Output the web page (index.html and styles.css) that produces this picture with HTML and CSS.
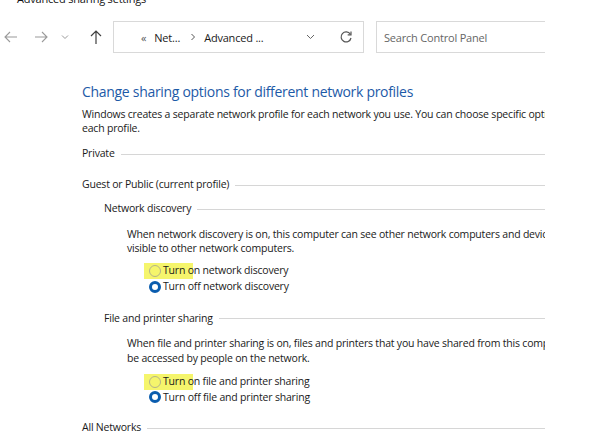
FILE: index.html
```html
<!DOCTYPE html>
<html>
<head>
<meta charset="utf-8">
<link rel="stylesheet" href="styles.css">
</head>
<body>
<div class="window">
  <div class="titlebar"><span class="title">Advanced sharing settings</span></div>
  <div class="nav">
    <div class="navbtns">
      <svg class="nb" width="16" height="16" viewBox="0 0 16 16"><path d="M14 8H2M7 3L2 8l5 5" fill="none" stroke="#9a9a9a" stroke-width="1.1"/></svg>
      <svg class="nb" width="16" height="16" viewBox="0 0 16 16"><path d="M2 8h12M9 3l5 5-5 5" fill="none" stroke="#9a9a9a" stroke-width="1.1"/></svg>
      <svg class="nb small" width="8" height="8" viewBox="0 0 8 8"><path d="M1 2.5l3 3 3-3" fill="none" stroke="#9a9a9a" stroke-width="1"/></svg>
      <svg class="nb" width="16" height="16" viewBox="0 0 16 16"><path d="M8 15V2M3 7l5-5 5 5" fill="none" stroke="#404040" stroke-width="1.2"/></svg>
    </div>
    <div class="address">
      <span class="crumbs">
        <span class="dbl">«</span>
        <span class="crumb">Net...</span>
        <svg width="6" height="8" viewBox="0 0 6 8" class="sep"><path d="M1.5 1l3 3-3 3" fill="none" stroke="#555" stroke-width="1"/></svg>
        <span class="crumb">Advanced ...</span>
      </span>
      <svg class="dd" width="9" height="6" viewBox="0 0 9 6"><path d="M1 1l3.5 3.5L8 1" fill="none" stroke="#666" stroke-width="1"/></svg>
      <svg class="refresh" width="14" height="14" viewBox="0 0 14 14"><path d="M11.3 4.2A5 5 0 1 0 12 8" fill="none" stroke="#555" stroke-width="1.2"/><path d="M12 1.5v3.3H8.7" fill="none" stroke="#555" stroke-width="1.2"/></svg>
    </div>
    <div class="search">Search Control Panel</div>
  </div>

  <div class="content">
    <h1 class="heading">Change sharing options for different network profiles</h1>
    <p class="intro">Windows creates a separate network profile for each network you use. You can choose specific options for<br>each profile.</p>

    <div class="group g-private">Private</div>
    <div class="group g-guest">Guest or Public (current profile)</div>

    <div class="sub g-nd">Network discovery</div>
    <p class="desc d-nd">When network discovery is on, this computer can see other network computers and devices and is<br>visible to other network computers.</p>
    <div class="options o-nd">
      <div class="opt"><span class="mark"><i class="radio"></i>Turn </span>on network discovery</div>
      <div class="opt"><i class="radio on"></i>Turn off network discovery</div>
    </div>

    <div class="sub g-fp">File and printer sharing</div>
    <p class="desc d-fp">When file and printer sharing is on, files and printers that you have shared from this computer can<br>be accessed by people on the network.</p>
    <div class="options o-fp">
      <div class="opt"><span class="mark"><i class="radio"></i>Turn </span>on file and printer sharing</div>
      <div class="opt"><i class="radio on"></i>Turn off file and printer sharing</div>
    </div>

    <div class="group g-all">All Networks</div>
  </div>
</div>
</body>
</html>
```

FILE: styles.css
```css
* { box-sizing: border-box; }
html, body { margin: 0; padding: 0; background: #fff; }
body {
  font-family: "Segoe UI", "Open Sans", "Noto Sans", sans-serif;
  font-size: 10.5px;
  letter-spacing: -0.2px;
  color: #1a1a1a;
  width: 590px;
  height: 440px;
  overflow: hidden;
}
.window {
  width: 545px;
  height: 440px;
  overflow: hidden;
}
.titlebar {
  height: 10px;
  overflow: hidden;
  padding-left: 17px;
}
.title {
  display: block;
  line-height: 16px;
  margin-top: -9px;
  font-size: 11px;
  color: #111;
  white-space: nowrap;
}
.nav {
  display: flex;
  align-items: center;
  height: 32px;
  margin-top: 11px;
}
.navbtns {
  display: flex;
  align-items: center;
  width: 113px;
  flex: none;
  padding-left: 3px;
}
.nb { flex: none; }
.navbtns .nb:nth-child(1) { margin-right: 14px; }
.navbtns .nb:nth-child(2) { margin-right: 12px; }
.navbtns .nb:nth-child(3) { margin-right: 19px; }
.address {
  width: 251px;
  height: 32px;
  border: 1px solid #d9d9d9;
  display: flex;
  align-items: center;
  padding-left: 27px;
  flex: none;
}
.crumbs {
  display: flex;
  align-items: center;
  font-size: 11px;
  color: #1a1a1a;
  white-space: nowrap;
}
.dbl { color: #555; font-size: 11px; margin-right: 8px; }
.sep { margin: 0 8px 0 10px; }
.dd { margin-left: auto; }
.refresh { margin-left: 24px; margin-right: 10px; }
.search {
  margin-left: 12px;
  flex: none;
  width: 200px;
  height: 32px;
  border: 1px solid #d9d9d9;
  display: flex;
  align-items: center;
  padding-left: 7px;
  color: #666;
  font-size: 11px;
  white-space: nowrap;
}
.content {
  padding-left: 82px;
  white-space: nowrap;
}
.heading {
  margin: 29px 0 0;
  font-size: 14px;
  letter-spacing: -0.3px;
  font-weight: normal;
  line-height: 20px;
  color: #1d5aa7;
}
.intro {
  margin: 5px 0 0;
  line-height: 14px;
}
.group, .sub {
  display: flex;
  align-items: center;
  line-height: 15px;
}
.group::after, .sub::after {
  content: "";
  flex: 1;
  border-top: 1px solid #d6d6d6;
  margin-left: 6px;
  margin-top: 1px;
}
.g-private { margin-top: 11px; }
.g-guest { margin-top: 16px; }
.sub { margin-left: 22px; }
.g-nd { margin-top: 9px; }
.g-fp { margin-top: 16px; }
.desc { margin: 0 0 0 45px; }
.d-nd { margin-top: 11px; line-height: 14px; }
.d-fp { margin-top: 10px; line-height: 15px; }
.options { margin-left: 67px; margin-top: 8px; }
.opt {
  display: flex;
  align-items: center;
  line-height: 15.5px;
}
.radio {
  display: inline-block;
  width: 12px;
  height: 12px;
  border-radius: 50%;
  border: 1px solid #b4b48a;
  margin-right: 2px;
  flex: none;
}
.radio.on {
  border: 3px solid #0a5cae;
  background: #fff;
}
.mark {
  display: inline-flex;
  align-items: center;
  background: #f5f56c;
  margin-left: -5px;
  padding-left: 5px;
  padding-right: 5px;
  margin-right: -5px;
  white-space: pre;
  height: 16px;
}
.g-all { margin-top: 15px; }
```
